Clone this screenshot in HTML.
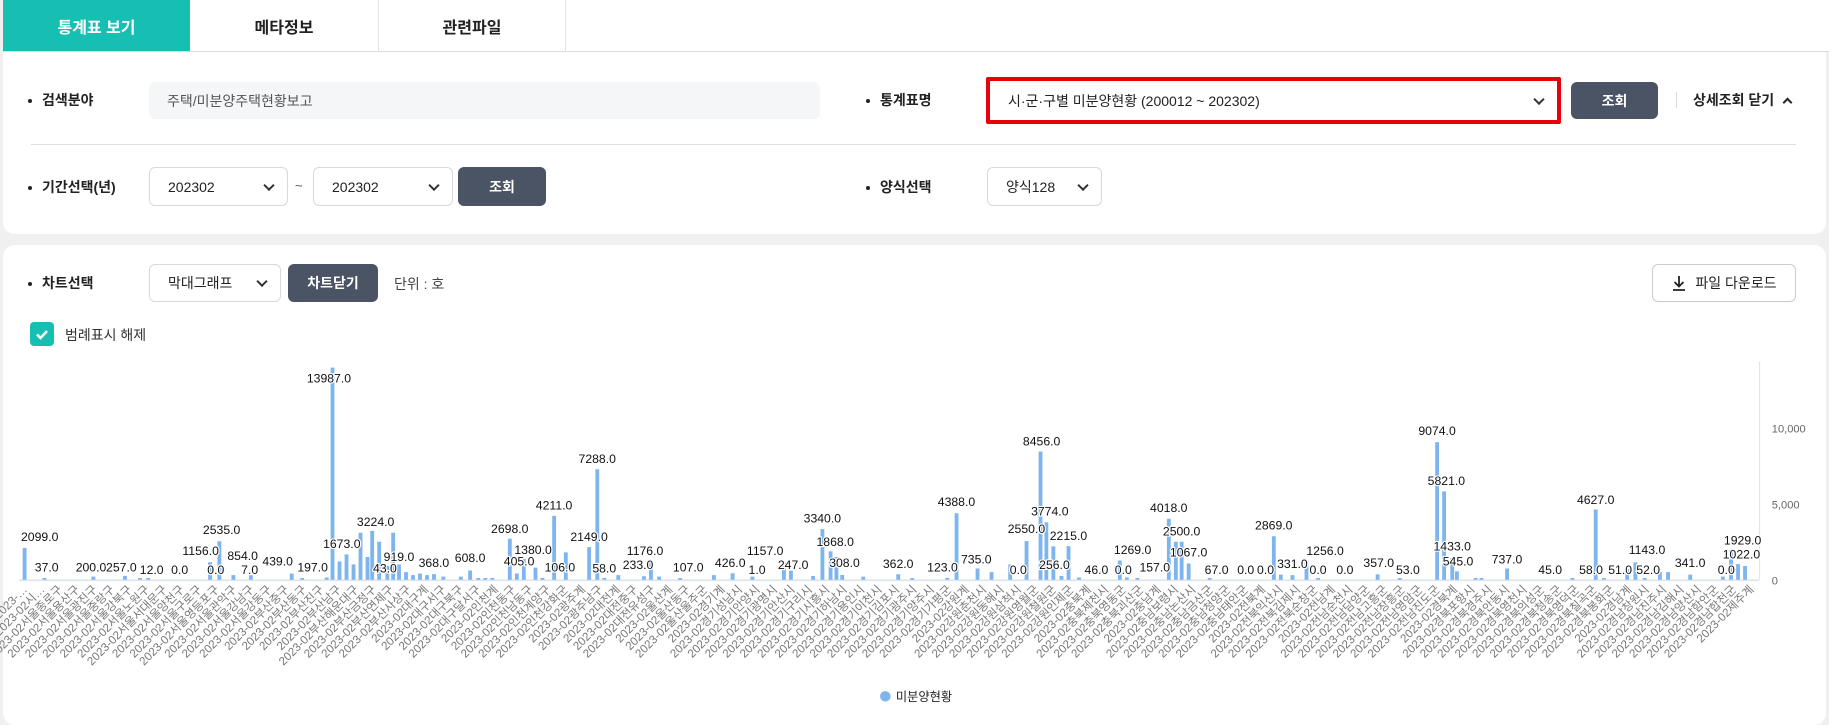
<!DOCTYPE html>
<html><head><meta charset="utf-8">
<style>
*{box-sizing:border-box;margin:0;padding:0}
body{width:1829px;height:715px;overflow:hidden;background:#f0f0f0;font-family:"Liberation Sans","Noto Sans CJK KR",sans-serif;color:#222;position:relative}
.abs{position:absolute}
.tabs{left:3px;top:0;width:1826px;height:52px;background:#fff;border-bottom:1px solid #dcdcdc}
.tab{position:absolute;top:0;height:51px;display:flex;align-items:center;justify-content:center;font-size:16px;font-weight:bold;border-right:1px solid #e3e3e3}
.p{background:#fff;border-radius:0 0 12px 12px}
.lbl{font-size:14px;font-weight:bold;color:#222}
.lbl:before{content:"";display:inline-block;width:4px;height:4px;background:#222;border-radius:50%;margin-right:10px;vertical-align:middle}
.sel{border:1px solid #d6d9dd;border-radius:6px;background:#fff;font-size:14px;display:flex;align-items:center;padding-left:18px}
.chev{position:absolute;right:14px;top:50%;width:8px;height:8px;border-right:2px solid #333;border-bottom:2px solid #333;transform:translateY(-70%) rotate(45deg)}
.btn{background:#4a5464;color:#fff;border-radius:6px;font-size:14px;font-weight:bold;display:flex;align-items:center;justify-content:center}
</style></head><body>
<div class="abs tabs">
<div class="tab" style="left:0;width:187px;background:#17bfb3;color:#fff;border:none">통계표 보기</div>
<div class="tab" style="left:187px;width:189px">메타정보</div>
<div class="tab" style="left:376px;width:187px">관련파일</div>
</div>
<div class="abs p" style="left:3px;top:52px;width:1823px;height:182px"></div>
<div class="abs lbl" style="left:28px;top:90px">검색분야</div>
<div class="abs" style="left:149px;top:82px;width:671px;height:37px;background:#f5f6f8;border-radius:6px;font-size:14px;color:#555;padding:9px 18px">주택/미분양주택현황보고</div>
<div class="abs lbl" style="left:866px;top:90px">통계표명</div>
<div class="abs sel" style="left:986px;top:77px;width:575px;height:47px;border:4px solid #e8000b;border-radius:2px;padding-left:18px">시·군·구별 미분양현황 (200012 ~ 202302)<span class="chev"></span></div>
<div class="abs btn" style="left:1571px;top:82px;width:87px;height:37px">조회</div>
<div class="abs" style="left:1676px;top:92px;width:1px;height:16px;background:#ddd"></div>
<div class="abs" style="left:1693px;top:90px;font-size:14px;font-weight:bold">상세조회 닫기 <span style="display:inline-block;width:7px;height:7px;border-left:2px solid #222;border-top:2px solid #222;transform:rotate(45deg);margin-left:6px;vertical-align:-1px"></span></div>
<div class="abs" style="left:31px;top:144px;width:1765px;height:1px;background:#dde0e3"></div>
<div class="abs lbl" style="left:28px;top:177px">기간선택(년)</div>
<div class="abs sel" style="left:149px;top:167px;width:139px;height:39px">202302<span class="chev"></span></div>
<div class="abs" style="left:295px;top:178px;font-size:13px;color:#555">~</div>
<div class="abs sel" style="left:313px;top:167px;width:140px;height:39px">202302<span class="chev"></span></div>
<div class="abs btn" style="left:458px;top:167px;width:88px;height:39px">조회</div>
<div class="abs lbl" style="left:866px;top:177px">양식선택</div>
<div class="abs sel" style="left:987px;top:167px;width:115px;height:39px">양식128<span class="chev"></span></div>

<div class="abs" style="left:3px;top:245px;width:1823px;height:480px;background:#fff;border-radius:12px"></div>
<div class="abs lbl" style="left:28px;top:273px">차트선택</div>
<div class="abs sel" style="left:149px;top:264px;width:132px;height:38px">막대그래프<span class="chev"></span></div>
<div class="abs btn" style="left:288px;top:264px;width:90px;height:38px">차트닫기</div>
<div class="abs" style="left:394px;top:274px;font-size:14px;color:#444">단위 : 호</div>
<div class="abs" style="left:1652px;top:264px;width:144px;height:38px;border:1px solid #ccc;border-radius:6px;font-size:14px;display:flex;align-items:center;justify-content:center">
<svg width="16" height="16" viewBox="0 0 16 16" style="margin-right:8px"><path d="M8 1v10M3.5 7l4.5 4.5L12.5 7M2 15h12" stroke="#222" stroke-width="1.8" fill="none"/></svg>파일 다운로드</div>
<div class="abs" style="left:30px;top:322px;width:24px;height:24px;background:#17bfb3;border-radius:4px"><svg width="24" height="24"><path d="M7 12.5l3.5 3.5L17 9" stroke="#fff" stroke-width="2.6" fill="none"/></svg></div>
<div class="abs" style="left:65px;top:325px;font-size:14px;color:#333">범례표시 해제</div>

<svg class="abs" style="left:0;top:0" width="1829" height="715" viewBox="0 0 1568 613">
<line x1="16" y1="497.5" x2="1508" y2="497.5" stroke="#dfe5f0" stroke-width="1.5"/>
<line x1="1508.5" y1="310" x2="1508.5" y2="497" stroke="#dfe5f0" stroke-width="1"/>
<g font-size="9.5" fill="#666" font-family="Liberation Sans,Noto Sans CJK KR,sans-serif"><text x="1519" y="371">10,000</text><text x="1519" y="436">5,000</text><text x="1519" y="501">0</text></g>
<path id="bars" fill="#7eb5ee" d=""/>
<g font-size="10.5" fill="#111" text-anchor="middle" font-family="Liberation Sans,sans-serif" stroke="#fff" stroke-width="2" paint-order="stroke">
<text x="34" y="464">2099.0</text><text x="40" y="490">37.0</text><text x="78" y="490">200.0</text><text x="104" y="490">257.0</text><text x="130" y="492">12.0</text><text x="154" y="492">0.0</text><text x="172" y="476">1156.0</text><text x="190" y="458">2535.0</text><text x="185" y="492">0.0</text><text x="208" y="480">854.0</text><text x="214" y="492">7.0</text><text x="238" y="485">439.0</text><text x="268" y="490">197.0</text><text x="282" y="328">13987.0</text><text x="293" y="470">1673.0</text><text x="322" y="451">3224.0</text><text x="330" y="491">43.0</text><text x="342" y="481">919.0</text><text x="372" y="486">368.0</text><text x="403" y="482">608.0</text><text x="437" y="457">2698.0</text><text x="445" y="485">405.0</text><text x="457" y="475">1380.0</text><text x="475" y="437">4211.0</text><text x="480" y="490">106.0</text><text x="505" y="464">2149.0</text><text x="512" y="397">7288.0</text><text x="518" y="491">58.0</text><text x="547" y="488">233.0</text><text x="553" y="476">1176.0</text><text x="590" y="490">107.0</text><text x="626" y="486">426.0</text><text x="656" y="476">1157.0</text><text x="649" y="492">1.0</text><text x="680" y="488">247.0</text><text x="705" y="448">3340.0</text><text x="716" y="468">1868.0</text><text x="724" y="486">308.0</text><text x="770" y="487">362.0</text><text x="808" y="490">123.0</text><text x="820" y="434">4388.0</text><text x="837" y="483">735.0</text><text x="873" y="492">0.0</text><text x="880" y="457">2550.0</text><text x="893" y="382">8456.0</text><text x="900" y="442">3774.0</text><text x="916" y="463">2215.0</text><text x="904" y="488">256.0</text><text x="940" y="492">46.0</text><text x="971" y="475">1269.0</text><text x="963" y="492">0.0</text><text x="990" y="490">157.0</text><text x="1002" y="439">4018.0</text><text x="1013" y="459">2500.0</text><text x="1019" y="477">1067.0</text><text x="1043" y="492">67.0</text><text x="1068" y="492">0.0</text><text x="1085" y="492">0.0</text><text x="1092" y="454">2869.0</text><text x="1108" y="487">331.0</text><text x="1136" y="476">1256.0</text><text x="1130" y="492">0.0</text><text x="1153" y="492">0.0</text><text x="1182" y="486">357.0</text><text x="1207" y="492">53.0</text><text x="1232" y="373">9074.0</text><text x="1240" y="416">5821.0</text><text x="1245" y="472">1433.0</text><text x="1250" y="485">545.0</text><text x="1292" y="483">737.0</text><text x="1329" y="492">45.0</text><text x="1364" y="492">58.0</text><text x="1368" y="432">4627.0</text><text x="1389" y="492">51.0</text><text x="1412" y="475">1143.0</text><text x="1413" y="492">52.0</text><text x="1449" y="486">341.0</text><text x="1480" y="492">0.0</text><text x="1494" y="467">1929.0</text><text x="1493" y="479">1022.0</text>
</g>
<g id="xl" font-size="10" fill="#777" text-anchor="end" font-family="Liberation Sans,Noto Sans CJK KR,sans-serif"><text>2023-…</text><text>2023-02시…</text><text>2023-02서울종로구</text><text>2023-02서울용산구</text><text>2023-02서울광진구</text><text>2023-02서울중랑구</text><text>2023-02서울강북구</text><text>2023-02서울노원구</text><text>2023-02서울서대문구</text><text>2023-02서울양천구</text><text>2023-02서울구로구</text><text>2023-02서울영등포구</text><text>2023-02서울관악구</text><text>2023-02서울강남구</text><text>2023-02서울강동구</text><text>2023-02부산중구</text><text>2023-02부산동구</text><text>2023-02부산진구</text><text>2023-02부산남구</text><text>2023-02부산해운대구</text><text>2023-02부산금정구</text><text>2023-02부산연제구</text><text>2023-02부산사상구</text><text>2023-02대구계</text><text>2023-02대구서구</text><text>2023-02대구북구</text><text>2023-02대구달서구</text><text>2023-02인천계</text><text>2023-02인천동구</text><text>2023-02인천남동구</text><text>2023-02인천계양구</text><text>2023-02인천강화군</text><text>2023-02광주계</text><text>2023-02광주남구</text><text>2023-02대전계</text><text>2023-02대전중구</text><text>2023-02대전유성구</text><text>2023-02울산계</text><text>2023-02울산동구</text><text>2023-02울산울주군</text><text>2023-02경기계</text><text>2023-02경기성남시</text><text>2023-02경기안양시</text><text>2023-02경기광명시</text><text>2023-02경기안산시</text><text>2023-02경기구리시</text><text>2023-02경기시흥시</text><text>2023-02경기하남시</text><text>2023-02경기용인시</text><text>2023-02경기이천시</text><text>2023-02경기김포시</text><text>2023-02경기광주시</text><text>2023-02경기양주시</text><text>2023-02경기가평군</text><text>2023-02강원계</text><text>2023-02강원춘천시</text><text>2023-02강원동해시</text><text>2023-02강원삼척시</text><text>2023-02강원영월군</text><text>2023-02강원철원군</text><text>2023-02강원인제군</text><text>2023-02충북계</text><text>2023-02충북제천시</text><text>2023-02충북영동군</text><text>2023-02충북괴산군</text><text>2023-02충남계</text><text>2023-02충남보령시</text><text>2023-02충남논산시</text><text>2023-02충남금산군</text><text>2023-02충남청양군</text><text>2023-02충남태안군</text><text>2023-02전북계</text><text>2023-02전북익산시</text><text>2023-02전북김제시</text><text>2023-02전북순창군</text><text>2023-02전남계</text><text>2023-02전남순천시</text><text>2023-02전남담양군</text><text>2023-02전남고흥군</text><text>2023-02전남장흥군</text><text>2023-02전남영암군</text><text>2023-02전남진도군</text><text>2023-02경북계</text><text>2023-02경북포항시</text><text>2023-02경북경주시</text><text>2023-02경북안동시</text><text>2023-02경북영천시</text><text>2023-02경북의성군</text><text>2023-02경북청송군</text><text>2023-02경북영덕군</text><text>2023-02경북칠곡군</text><text>2023-02경북봉화군</text><text>2023-02경남계</text><text>2023-02경남창원시</text><text>2023-02경남진주시</text><text>2023-02경남김해시</text><text>2023-02경남양산시</text><text>2023-02경남함안군</text><text>2023-02경남합천군</text><text>2023-02제주계</text></g>
<circle cx="759" cy="597" r="4.5" fill="#7eb5ee"/>
<text x="768" y="601" font-size="10.5" fill="#222" font-family="Liberation Sans,Noto Sans CJK KR,sans-serif">미분양현황</text>
</svg>
<script>
var d=[[21,2099],[38,37],[80,200],[107,257],[120,50],[127,12],[180,1156],[188,2535],[200,300],[215,300],[250,400],[259,100],[280,150],[285,13987],[291,1200],[297,1673],[303,1000],[309,3100],[315,1500],[319,3224],[325,2500],[332,919],[337,3100],[342,1000],[348,500],[354,300],[360,400],[366,300],[372,368],[380,200],[395,200],[403,608],[410,100],[416,100],[422,100],[437,2698],[443,405],[449,1380],[459,800],[465,106],[475,4211],[485,1800],[505,2149],[512,7288],[518,58],[530,300],[552,233],[558,1176],[565,200],[583,107],[612,300],[628,426],[645,200],[672,1157],[678,600],[697,247],[705,3340],[712,1868],[717,1500],[722,308],[740,200],[770,362],[782,100],[812,123],[820,4388],[838,735],[850,500],[866,1000],[880,2550],[892,8456],[897,3774],[903,2200],[910,256],[916,2215],[925,150],[960,1269],[966,157],[975,100],[1002,4018],[1008,2500],[1013,2500],[1019,1067],[1037,67],[1092,2869],[1098,331],[1108,300],[1120,1256],[1130,100],[1181,357],[1200,53],[1232,9074],[1238,5821],[1245,1433],[1249,545],[1265,100],[1270,100],[1292,737],[1348,58],[1368,4627],[1375,51],[1395,700],[1402,1143],[1410,52],[1423,500],[1430,500],[1449,341],[1477,200],[1484,1929],[1490,1022],[1496,900]];
var p="";d.forEach(function(b){var h=b[1]*0.013;if(h<1.5)h=1.5;p+="M"+(b[0]-1.6)+" 497v-"+h.toFixed(1)+"h3.3v"+h.toFixed(1)+"z";});
document.getElementById("bars").setAttribute("d",p);
var t=document.querySelectorAll("#xl text");for(var i=0;i<t.length;i++){var x=24+i*(1480/(t.length-1));t[i].setAttribute("transform","translate("+x.toFixed(1)+",506) rotate(-45)");}
</script>
</body></html>
